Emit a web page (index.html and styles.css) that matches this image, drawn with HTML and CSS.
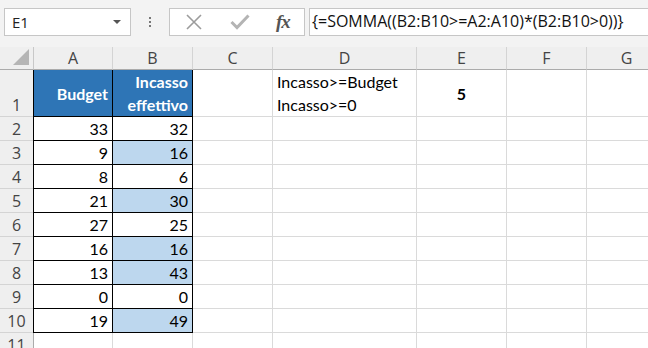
FILE: index.html
```html
<!DOCTYPE html>
<html lang="it">
<head>
    <meta charset="UTF-8">
    <title>SOMMA matrice</title>
    <link rel="stylesheet" href="styles.css">
</head>
<body>

    <!-- Barra della formula -->
    <div class="toolbar">
        <div class="namebox">
            <span>E1</span>
            <span class="caret"></span>
        </div>
        <div class="dots">
            <span></span><span></span><span></span>
        </div>
        <div class="buttons">
            <svg class="btn-x" width="16" height="16" viewBox="0 0 16 16">
                <path d="M1 1 L15 15 M15 1 L1 15" stroke="#9c9c9c" stroke-width="1.6" fill="none"/>
            </svg>
            <svg class="btn-ok" width="20" height="16" viewBox="0 0 20 16">
                <path d="M1.5 8 L7 13.5 L18.5 1.5" stroke="#b4b4b4" stroke-width="3" fill="none"/>
            </svg>
            <span class="fx">fx</span>
        </div>
        <div class="formula">{=SOMMA((B2:B10&gt;=A2:A10)*(B2:B10&gt;0))}</div>
    </div>

    <!-- Foglio -->
    <div class="sheet">
        <div class="corner"><span class="tri"></span></div>
        <div class="ch">A</div>
        <div class="ch">B</div>
        <div class="ch">C</div>
        <div class="ch">D</div>
        <div class="ch">E</div>
        <div class="ch">F</div>
        <div class="ch">G</div>

        <div class="rh">1</div>
        <div class="c t first head mid">Budget</div>
        <div class="c t head wrap">Incasso<br>effettivo</div>
        <div class="c"></div>
        <div class="c note">Incasso&gt;=Budget<br>Incasso&gt;=0</div>
        <div class="c result">5</div>
        <div class="c"></div>
        <div class="c"></div>
    </div>

    <script>
        // righe dati: budget, incasso
        let data = [[33, 32], [9, 16], [8, 6], [21, 30], [27, 25], [16, 16], [13, 43], [0, 0], [19, 49]];
        let sheet = document.querySelector('.sheet');

        function addCell(cls, text) {
            let d = document.createElement('div');
            d.className = cls;
            d.textContent = text;
            sheet.appendChild(d);
        }

        data.forEach(function (row, i) {
            addCell('rh', i + 2);
            addCell('c t first num', row[0]);
            let hit = row[1] >= row[0] && row[1] > 0;
            addCell('c t num' + (hit ? ' hit' : ''), row[1]);
            for (let k = 0; k < 5; k++) addCell('c', '');
        });

        addCell('rh', 11);
        for (let k = 0; k < 7; k++) addCell('c', '');
    </script>

</body>
</html>
```

FILE: styles.css
```css
body {
    margin: 0;
    width: 648px;
    height: 348px;
    overflow: hidden;
    background: #fff;
    font-family: Lato, "Liberation Sans", sans-serif;
}

/* Barra formula */
.toolbar {
    height: 47px;
    background: #f3f3f3;
    display: flex;
    align-items: flex-start;
    padding: 8px 0 0 4px;
    box-sizing: border-box;
}
.namebox {
    width: 127px;
    height: 28px;
    box-sizing: border-box;
    background: #fff;
    border: 1px solid #c6c6c6;
    display: flex;
    align-items: center;
    justify-content: space-between;
    padding: 0 9px 0 7px;
    font-family: "Open Sans", sans-serif;
    font-size: 15px;
    color: #222;
}
.caret {
    width: 0;
    height: 0;
    border-left: 4px solid transparent;
    border-right: 4px solid transparent;
    border-top: 4px solid #555;
}
.dots {
    width: 38px;
    height: 28px;
    display: flex;
    flex-direction: column;
    align-items: center;
    justify-content: center;
    gap: 2px;
}
.dots span {
    width: 2px;
    height: 2px;
    background: #777;
}
.buttons {
    width: 136px;
    height: 28px;
    box-sizing: border-box;
    background: #fff;
    border: 1px solid #c6c6c6;
    display: flex;
    align-items: center;
    padding-left: 16px;
}
.btn-x { margin-right: 28px; }
.btn-ok { margin-right: 26px; }
.fx {
    font-family: "Liberation Serif", serif;
    font-style: italic;
    font-weight: bold;
    font-size: 19px;
    color: #555;
    letter-spacing: -1px;
}
.formula {
    flex: 1;
    height: 28px;
    margin-left: 4px;
    box-sizing: border-box;
    background: #fff;
    border: 1px solid #c6c6c6;
    border-right: none;
    padding: 1px 0 0 2px;
    font-family: "Open Sans", sans-serif;
    font-size: 16px;
    color: #111;
    white-space: nowrap;
}

/* Foglio */
.sheet {
    display: grid;
    grid-template-columns: 34px 79px 80px 80px 144px 90px 80px 80px;
    grid-template-rows: 23px 47px repeat(10, 24px);
}
.corner, .ch, .rh {
    background: #efefef;
    color: #444;
    font-family: "Open Sans", sans-serif;
    font-size: 16px;
    box-sizing: border-box;
}
.corner {
    position: relative;
    border-right: 1px solid #c8c8c8;
    border-bottom: 1px solid #ababab;
}
.tri {
    position: absolute;
    right: 4px;
    bottom: 4px;
    width: 0;
    height: 0;
    border-left: 16px solid transparent;
    border-bottom: 16px solid #b5b5b5;
}
.ch {
    display: flex;
    align-items: center;
    justify-content: center;
    border-right: 1px solid #d4d4d4;
    border-bottom: 1px solid #ababab;
    line-height: 1;
}
.rh {
    display: flex;
    align-items: flex-end;
    justify-content: center;
    border-right: 1px solid #ababab;
    border-bottom: 1px solid #d4d4d4;
    line-height: 22px;
}
.c {
    box-sizing: border-box;
    border-right: 1px solid #dadada;
    border-bottom: 1px solid #dadada;
    font-size: 16px;
    color: #000;
    line-height: 23px;
    padding: 0 4px;
    white-space: nowrap;
}
.t {
    border-right: 1px solid #000;
    border-bottom: 1px solid #000;
}
.first {
    border-left: 1px solid #000;
    margin-left: -1px;
}
.num { text-align: right; }
.hit { background: #bdd7ee; }
.head {
    background: #2e75b6;
    color: #fff;
    font-weight: bold;
    text-align: right;
}
.mid {
    display: flex;
    align-items: center;
    justify-content: flex-end;
}
.wrap { padding-top: 0; }
.note { padding-top: 0; }
.result {
    font-weight: bold;
    text-align: center;
    display: flex;
    align-items: center;
    justify-content: center;
}
```
